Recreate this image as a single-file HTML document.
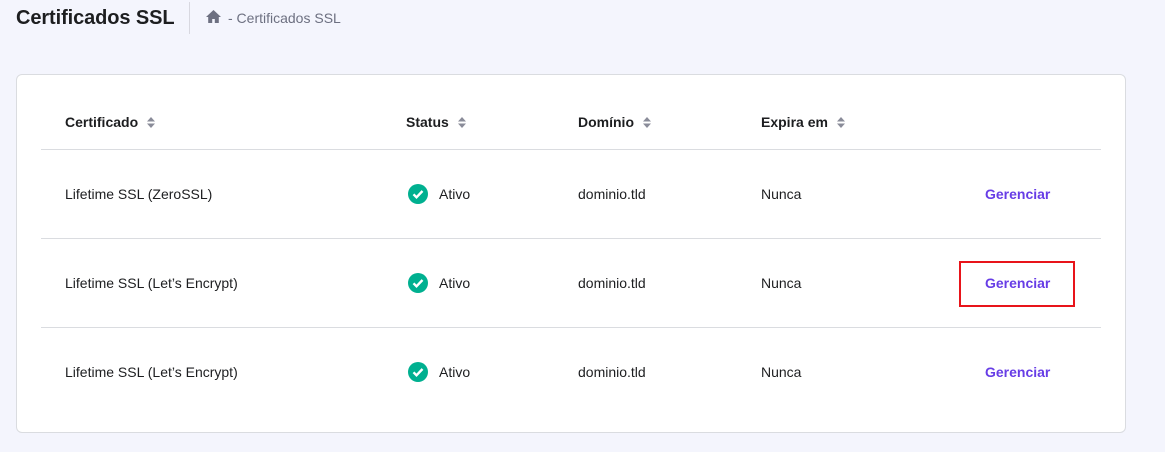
<!DOCTYPE html>
<html><head><meta charset="utf-8"><style>
*{margin:0;padding:0;box-sizing:border-box}
body{width:1165px;height:452px;background:#f4f5fd;font-family:"Liberation Sans",sans-serif;color:#2f1c6a;position:relative;overflow:hidden}
.t{position:absolute;left:16px;top:7px;font-size:20px;font-weight:bold;color:#1d1e20;letter-spacing:-0.1px}
.sep{position:absolute;left:189px;top:2px;width:1px;height:32px;background:#d8d8e0}
.bc{position:absolute;top:10px;font-size:14px;color:#6d7081}
.card{position:absolute;left:16px;top:74px;width:1110px;height:359px;background:#fff;border:1px solid #dadce0;border-radius:6px}
.h{position:absolute;top:114px;font-size:14px;font-weight:bold;color:#1d1e20}
.srt{display:inline-block;margin-left:9px;vertical-align:-1px}
.line{position:absolute;left:41px;width:1060px;height:1px;background:#dadce0}
.c{position:absolute;font-size:14px;color:#1d1e20}
.g{position:absolute;font-size:14px;font-weight:bold;color:#673de6}
.ck{position:absolute;width:20px;height:20px;border-radius:50%;background:#00b090}
</style></head><body>
<div class="t">Certificados SSL</div><div class="sep"></div>
<svg style="position:absolute;left:205px;top:9px" width="17" height="15" viewBox="0 0 17 15"><path d="M8.5 1L1 8h2.2v6h4v-4h2.6v4h4V8H16z" fill="#6d7081"/></svg>
<div class="bc" style="left:228px">- Certificados SSL</div>
<div class="card"></div>
<div class="h" style="left:65px">Certificado<svg class="srt" width="8" height="11" viewBox="0 0 8 11"><path d="M0 4.5L4 0 8 4.5zM0 6.5L4 11 8 6.5z" fill="#8a8c99"/></svg></div>
<div class="h" style="left:406px">Status<svg class="srt" width="8" height="11" viewBox="0 0 8 11"><path d="M0 4.5L4 0 8 4.5zM0 6.5L4 11 8 6.5z" fill="#8a8c99"/></svg></div>
<div class="h" style="left:578px">Domínio<svg class="srt" width="8" height="11" viewBox="0 0 8 11"><path d="M0 4.5L4 0 8 4.5zM0 6.5L4 11 8 6.5z" fill="#8a8c99"/></svg></div>
<div class="h" style="left:761px">Expira em<svg class="srt" width="8" height="11" viewBox="0 0 8 11"><path d="M0 4.5L4 0 8 4.5zM0 6.5L4 11 8 6.5z" fill="#8a8c99"/></svg></div>
<div class="line" style="top:149px"></div><div class="line" style="top:238px"></div><div class="line" style="top:327px"></div>
<div class="c" style="left:65px;top:186px">Lifetime SSL (ZeroSSL)</div>
<div class="c" style="left:65px;top:275px">Lifetime SSL (Let’s Encrypt)</div>
<div class="c" style="left:65px;top:364px">Lifetime SSL (Let’s Encrypt)</div>
<svg class="ck" style="left:408px;top:184px" viewBox="0 0 20 20"><path d="M5.5 10.3l3 3 6-6.3" stroke="#fff" stroke-width="2.4" fill="none"/></svg>
<svg class="ck" style="left:408px;top:273px" viewBox="0 0 20 20"><path d="M5.5 10.3l3 3 6-6.3" stroke="#fff" stroke-width="2.4" fill="none"/></svg>
<svg class="ck" style="left:408px;top:362px" viewBox="0 0 20 20"><path d="M5.5 10.3l3 3 6-6.3" stroke="#fff" stroke-width="2.4" fill="none"/></svg>
<div class="c" style="left:439px;top:186px">Ativo</div><div class="c" style="left:439px;top:275px">Ativo</div><div class="c" style="left:439px;top:364px">Ativo</div>
<div class="c" style="left:578px;top:186px">dominio.tld</div><div class="c" style="left:578px;top:275px">dominio.tld</div><div class="c" style="left:578px;top:364px">dominio.tld</div>
<div class="c" style="left:761px;top:186px">Nunca</div><div class="c" style="left:761px;top:275px">Nunca</div><div class="c" style="left:761px;top:364px">Nunca</div>
<div class="g" style="left:985px;top:186px">Gerenciar</div><div class="g" style="left:985px;top:275px">Gerenciar</div><div class="g" style="left:985px;top:364px">Gerenciar</div>
<div style="position:absolute;left:959px;top:261px;width:116px;height:46px;border:2px solid #e8141a"></div>
</body></html>
